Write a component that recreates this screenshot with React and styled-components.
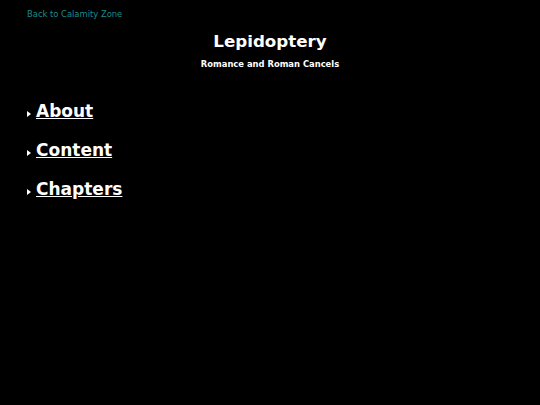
import React from 'react'
import styled, { createGlobalStyle } from 'styled-components'

const Global = createGlobalStyle`
    html, body {
        margin: 0;
        background: #000;
    }
    body {
        font-family: "DejaVu Sans", Verdana, sans-serif;
        color: #fff;
    }
`

const Page = styled.div`
    padding: 8px 27px;
`

const BackLink = styled.a`
    display: block;
    color: #1c8c8c;
    font-size: 8.4px;
    text-decoration: none;
    line-height: 12px;
`

const Header = styled.header`
    text-align: center;
    margin-top: 10px;

    h1 {
        margin: 0;
        font-size: 16.7px;
        line-height: 22px;
    }
    p {
        margin: 7px 0 0;
        font-size: 8.4px;
        font-weight: bold;
    }
`

const Sections = styled.div`
    margin-top: 30px;
    display: flex;
    flex-direction: column;
    gap: 15px;
`

const Item = styled.div`
    display: flex;
    align-items: center;

    .marker {
        width: 0;
        height: 0;
        border-top: 3px solid transparent;
        border-bottom: 3px solid transparent;
        border-left: 4px solid #fff;
        margin: 6px 5px 0 0;
    }

    a {
        color: #fff;
        font-size: 17px;
        font-weight: bold;
        line-height: 24px;
        text-decoration: underline;
    }
`

const sections = ['About', 'Content', 'Chapters']

const App = () => {
    return (
        <>
            <Global />
            <Page>
                <BackLink href="#">Back to Calamity Zone</BackLink>
                <Header>
                    <h1>Lepidoptery</h1>
                    <p>Romance and Roman Cancels</p>
                </Header>
                <Sections>
                    {sections.map(s => (
                        <Item key={s}>
                            <span className="marker" />
                            <a href="#">{s}</a>
                        </Item>
                    ))}
                </Sections>
            </Page>
        </>
    )
}

export default App
